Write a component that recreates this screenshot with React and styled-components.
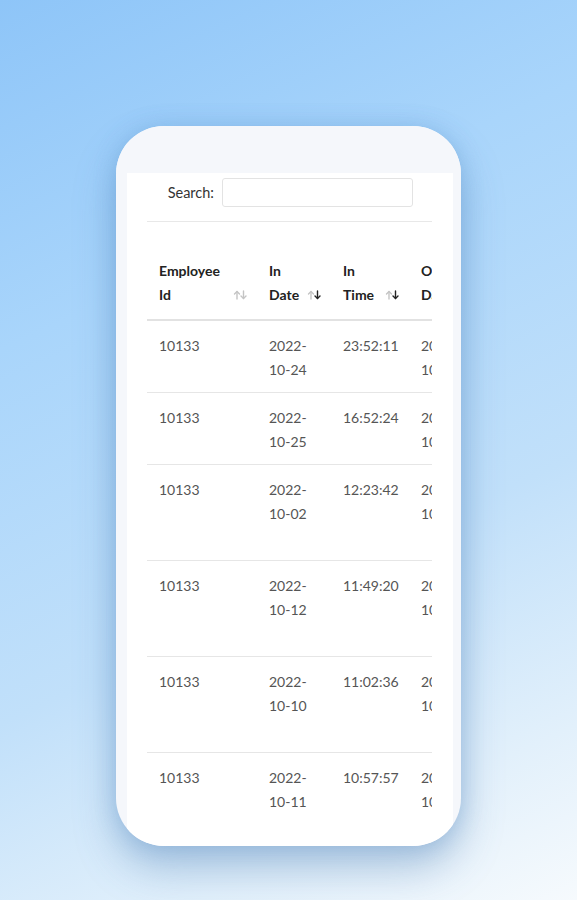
import React from 'react';
import styled, {createGlobalStyle} from "styled-components";

const GlobalStyle = createGlobalStyle`
  html, body {
    margin: 0;
    padding: 0;
  }
  body {
    font-family: Lato, "Open Sans", "Liberation Sans", sans-serif;
  }
`;

const columns = [
    {title: "Employee Id", width: 110, sort: "none"},
    {title: "In Date", width: 74, sort: "desc"},
    {title: "In Time", width: 78, sort: "desc"},
    {title: "Out Date", width: 74, sort: "none"},
    {title: "Remarks", width: 90, sort: "none"},
];

const rows = [
    ["10133", "2022-10-24", "23:52:11", "2022-10-25", "On time"],
    ["10133", "2022-10-25", "16:52:24", "2022-10-26", "On time"],
    ["10133", "2022-10-02", "12:23:42", "2022-10-02", "Approved overtime request"],
    ["10133", "2022-10-12", "11:49:20", "2022-10-12", "Traffic delay reported"],
    ["10133", "2022-10-10", "11:02:36", "2022-10-10", "Worked from branch"],
    ["10133", "2022-10-11", "10:57:57", "2022-10-11", "Approved overtime request"],
];

function SortIcon({active}) {
    return (
        <SortMark width="15" height="10" viewBox="0 0 15 10">
            <g fill="none" strokeWidth="1.4" strokeLinecap="round" strokeLinejoin="round">
                <g stroke="#c4c4c4">
                    <path d="M4 9V1.5"/>
                    <path d="M1.5 4L4 1.5 6.5 4"/>
                </g>
                <g stroke={active ? "#222" : "#c4c4c4"}>
                    <path d="M10.5 1V8.5"/>
                    <path d="M8 6L10.5 8.5 13 6"/>
                </g>
            </g>
        </SortMark>
    );
}

export default function App() {
    return (
        <>
            <GlobalStyle/>
            <Page>
                <Phone>
                    <TopBar/>
                    <Panel>
                        <SearchRow>
                            <SearchLabel>Search:</SearchLabel>
                            <SearchInput type="text"/>
                        </SearchRow>
                        <Divider/>
                        <TableWrap>
                            <Table>
                                <colgroup>
                                    {columns.map((c) => <col key={c.title} style={{width: c.width}}/>)}
                                </colgroup>
                                <thead>
                                <tr>
                                    {columns.map((c) => (
                                        <Th key={c.title}>
                                            {c.title}
                                            <SortIcon active={c.sort === "desc"}/>
                                        </Th>
                                    ))}
                                </tr>
                                </thead>
                                <tbody>
                                {rows.map((r, i) => (
                                    <tr key={i}>
                                        {r.map((v, j) => <Td key={j}>{v}</Td>)}
                                    </tr>
                                ))}
                                </tbody>
                            </Table>
                        </TableWrap>
                    </Panel>
                </Phone>
            </Page>
        </>
    );
}

const Page = styled.div`
  width: 577px;
  height: 900px;
  box-sizing: border-box;
  padding-top: 126px;
  display: flex;
  justify-content: center;
  align-items: flex-start;
  overflow: hidden;
  background: linear-gradient(155deg, #8ec5f8 0%, #a9d5fb 30%, #c1e0fa 62%, #e2f0fb 85%, #f6fafd 100%);
`;

const Phone = styled.div`
  width: 345px;
  height: 720px;
  border-radius: 48px;
  overflow: hidden;
  background: #f5f7fb;
  display: flex;
  flex-direction: column;
  box-shadow: 0 22px 40px rgba(70, 120, 175, 0.38), 0 0 22px rgba(90, 150, 210, 0.3);
`;

const TopBar = styled.div`
  height: 47px;
  flex-shrink: 0;
  background: #f5f7fb;
`;

const Panel = styled.div`
  flex: 1;
  margin: 0 8px 0 11px;
  background: #fff;
  padding: 5px 21px 0 20px;
  display: flex;
  flex-direction: column;
`;

const SearchRow = styled.div`
  display: flex;
  justify-content: flex-end;
  align-items: center;
  gap: 8px;
  padding-right: 19px;
`;

const SearchLabel = styled.label`
  font-size: 14.5px;
  color: #333;
`;

const SearchInput = styled.input`
  width: 191px;
  height: 29px;
  box-sizing: border-box;
  border: 1px solid #e3e3e3;
  border-radius: 3px;
  outline: none;
  background: #fff;
`;

const Divider = styled.div`
  height: 1px;
  background: #e8e8e8;
  margin-top: 14px;
`;

const TableWrap = styled.div`
  margin-top: 25px;
  overflow: hidden;
`;

const Table = styled.table`
  table-layout: fixed;
  border-collapse: collapse;
  width: 426px;
  font-size: 14px;
  line-height: 24px;
`;

const Th = styled.th`
  position: relative;
  text-align: left;
  vertical-align: bottom;
  font-weight: 700;
  color: #222;
  padding: 12px 30px 12px 12px;
  border-bottom: 2px solid #e2e2e2;
`;

const SortMark = styled.svg`
  position: absolute;
  right: 9px;
  bottom: 19px;
`;

const Td = styled.td`
  vertical-align: top;
  color: #555;
  padding: 13px 12px 10px;
  border-bottom: 1px solid #e6e6e6;
`;
